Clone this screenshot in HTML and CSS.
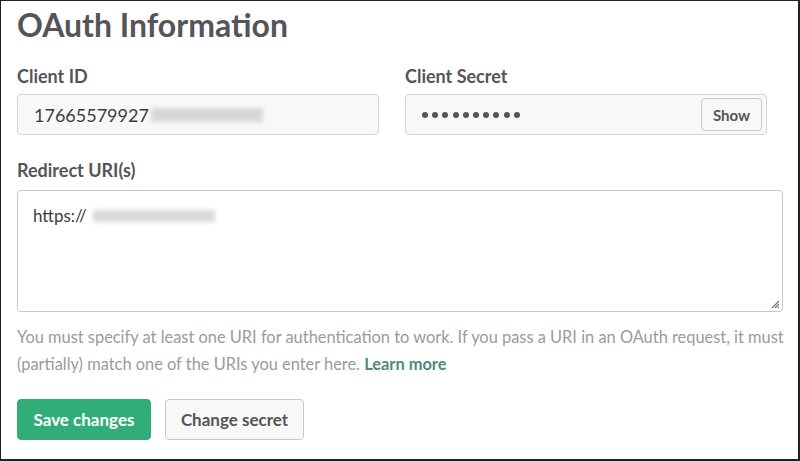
FILE: index.html
```html
<!DOCTYPE html>
<html>
<head>
<meta charset="utf-8">
<link rel="stylesheet" href="styles.css">
</head>
<body>
<div class="page">
  <h1 class="title">OAuth Information</h1>
  <div class="row">
    <div class="field">
      <label class="label">Client ID</label>
      <div class="input readonly"><span class="value">17665579927</span><span class="redact redact-id"></span></div>
    </div>
    <div class="field">
      <label class="label">Client Secret</label>
      <div class="input readonly secret">
        <span class="dots"><i></i><i></i><i></i><i></i><i></i><i></i><i></i><i></i><i></i><i></i></span>
        <button class="show-btn">Show</button>
      </div>
    </div>
  </div>
  <div class="field">
    <label class="label label-gap">Redirect URI(s)</label>
    <div class="textarea"><span class="value small">https://</span><span class="redact redact-uri"></span>
      <svg class="grip" width="10" height="10" viewBox="0 0 10 10"><path d="M9 2 L2 9 M9 5 L5 9 M9 8 L8 9" stroke="#777" stroke-width="1.2"/></svg>
    </div>
  </div>
  <p class="help">You must specify at least one URI for authentication to work. If you pass a URI in an OAuth request, it must (partially) match one of the URIs you enter here. <a class="link">Learn more</a></p>
  <div class="actions">
    <button class="btn primary">Save changes</button>
    <button class="btn secondary">Change secret</button>
  </div>
</div>
</body>
</html>
```
FILE: styles.css
```css
html, body { margin: 0; padding: 0; }
body {
  width: 800px;
  height: 461px;
  box-sizing: border-box;
  border-top: 1px solid #222;
  border-left: 1px solid #222;
  border-right: 2px solid #222;
  border-bottom: 2px solid #222;
  background: #fff;
  font-family: Lato, "Open Sans", sans-serif;
  color: #555459;
  overflow: hidden;
}
.page { padding: 0 0 0 16px; }
.title {
  margin: 0;
  font-size: 32px;
  line-height: 40px;
  padding-top: 4px;
  font-weight: 700;
  color: #555459;
}
.row { display: grid; grid-template-columns: 388px 388px; }
.field { display: flex; flex-direction: column; }
.label {
  font-size: 18px;
  font-weight: 700;
  line-height: 22px;
  margin-top: 20px;
  margin-bottom: 7px;
  color: #555459;
}
.label-gap { margin-top: 24px; margin-bottom: 9px; }
.input {
  width: 362px;
  height: 41px;
  box-sizing: border-box;
  border: 1px solid #d4d4d4;
  border-radius: 4px;
  background: #f8f8f7;
  display: flex;
  align-items: center;
  padding-left: 16px;
  position: relative;
}
.value { font-size: 18px; color: #3d3c40; }
.value.small { font-size: 17px; }
.redact {
  display: inline-block;
  height: 14px;
  background: #cfcfcf;
  filter: blur(2px);
  opacity: 0.8;
}
.redact-id { width: 112px; margin-left: 2px; }
.secret { padding-right: 4px; justify-content: space-between; }
.dots { display: flex; gap: 4.2px; }
.dots i { display: block; width: 6px; height: 6px; border-radius: 50%; background: #555459; }
.show-btn {
  height: 33px;
  width: 61px;
  border: 1px solid #c8c8c8;
  border-radius: 4px;
  background: #f8f8f7;
  font-family: Lato, sans-serif;
  font-weight: 700;
  font-size: 15px;
  color: #555459;
  padding: 0;
}
.textarea {
  width: 766px;
  height: 122px;
  box-sizing: border-box;
  border: 1px solid #c8c8c8;
  border-radius: 4px;
  background: #fff;
  padding: 14px 15px;
  position: relative;
  display: flex;
  align-items: flex-start;
}
.redact-uri { width: 122px; margin-left: 6px; margin-top: 5px; height: 12px; }
.grip { position: absolute; right: 2px; bottom: 2px; }
.help {
  margin: 11px 0 0 0;
  width: 772px;
  font-size: 16.4px;
  line-height: 27px;
  color: #9a9a9f;
}
.link { color: #4e8a7c; font-weight: 700; }
.actions { display: flex; gap: 14px; margin-top: 22px; }
.btn {
  height: 41px;
  border-radius: 4px;
  font-family: Lato, sans-serif;
  font-weight: 700;
  font-size: 17px;
  padding: 0;
  box-sizing: border-box;
  white-space: nowrap;
}
.primary { background: #31ad79; color: #fff; border: 1px solid #31ad79; width: 134px; }
.secondary { background: #f8f8f7; color: #555459; border: 1px solid #c8c8c8; width: 139px; }
```
